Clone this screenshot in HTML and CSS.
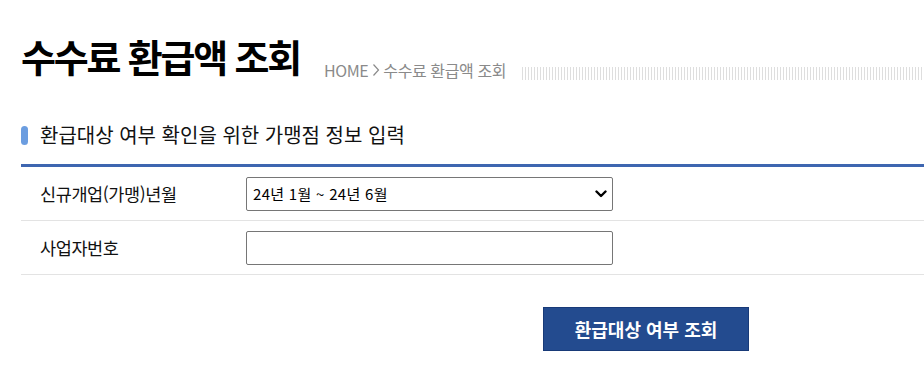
FILE: index.html
```html
<!DOCTYPE html>
<html lang="ko">
<head>
<meta charset="utf-8">
<title>수수료 환급액 조회</title>
<link rel="stylesheet" href="styles.css">
</head>
<body>
<div class="page">
  <header class="head">
    <h1 class="title">수수료 환급액 조회</h1>
    <div class="crumb">HOME<svg class="gt" width="8" height="14" viewBox="0 0 8 14"><path d="M1.5 1.5 L6.5 7 L1.5 12.5" fill="none" stroke="#8a8a8a" stroke-width="1.2"/></svg>수수료 환급액 조회</div>
    <div class="stripes"></div>
  </header>

  <h2 class="section"><span class="marker"></span>환급대상 여부 확인을 위한 가맹점 정보 입력</h2>

  <div class="form">
    <div class="row">
      <div class="label">신규개업(가맹)년월</div>
      <div class="field selwrap">
        <select class="ctl sel">
          <option>24년 1월 ~ 24년 6월</option>
        </select>
        <svg class="chev" width="12" height="8" viewBox="0 0 12 8"><path d="M1.5 1.5 L6 6 L10.5 1.5" fill="none" stroke="#000" stroke-width="2.4" stroke-linecap="round" stroke-linejoin="round"/></svg>
      </div>
    </div>
    <div class="row">
      <div class="label">사업자번호</div>
      <div class="field">
        <input class="ctl inp" type="text">
      </div>
    </div>
  </div>

  <div class="actions">
    <button class="btn" type="button">환급대상 여부 조회</button>
  </div>
</div>
</body>
</html>
```

FILE: styles.css
```css
html, body {
  margin: 0;
  padding: 0;
  background: #fff;
  overflow: hidden;
}
body {
  font-family: "Noto Sans CJK KR", "Noto Sans", sans-serif;
  color: #111;
}
.page {
  padding-left: 21px;
}
.head {
  display: flex;
  align-items: flex-end;
  padding-top: 24px;
  height: 58px;
}
.title {
  margin: 0;
  font-size: 38px;
  font-weight: 700;
  letter-spacing: -2.2px;
  line-height: 52px;
  color: #000;
}
.crumb {
  display: flex;
  align-items: center;
  margin-left: 24px;
  font-size: 16px;
  color: #8a8a8a;
  line-height: 20px;
  padding-bottom: 2px;
  white-space: nowrap;
  letter-spacing: -0.4px;
}
.gt {
  margin: 0 3px 0 4px;
}
.stripes {
  flex: 1;
  margin-left: 16px;
  height: 13px;
  margin-bottom: 2px;
  background: repeating-linear-gradient(to right, #dedede 0, #dedede 1px, transparent 1px, transparent 3px);
}
.section {
  display: flex;
  align-items: center;
  margin: 41px 0 0 0;
  font-size: 20px;
  font-weight: 400;
  line-height: 24px;
  color: #111;
  padding-bottom: 17px;
  border-bottom: 3px solid #3e66b0;
}
.marker {
  width: 7px;
  height: 19px;
  border-radius: 4px;
  background: #6b9de0;
  margin-right: 12px;
}
.row {
  display: flex;
  align-items: center;
  height: 53px;
  border-bottom: 1px solid #e3e3e3;
}
.label {
  width: 206px;
  padding-left: 19px;
  font-size: 17.5px;
  color: #111;
  letter-spacing: -0.4px;
}
.selwrap {
  position: relative;
}
.ctl {
  box-sizing: border-box;
  width: 367px;
  height: 34px;
  border: 1px solid #767676;
  border-radius: 2px;
  background: #fff;
  font-family: "Noto Sans CJK KR", sans-serif;
  font-size: 15px;
  color: #000;
  margin: 0;
  display: block;
}
.sel {
  -webkit-appearance: none;
  appearance: none;
  padding-left: 6px;
  letter-spacing: 0.3px;
}
.chev {
  position: absolute;
  right: 6px;
  top: 13px;
  pointer-events: none;
}
.inp {
  padding: 0 6px;
}
.actions {
  padding: 32px 0 0 522px;
}
.btn {
  width: 206px;
  height: 44px;
  background: #234b8f;
  border: 1px solid #183a78;
  color: #fff;
  font-family: "Noto Sans CJK KR", sans-serif;
  font-size: 18px;
  font-weight: 700;
  letter-spacing: 0;
  cursor: pointer;
}
```
